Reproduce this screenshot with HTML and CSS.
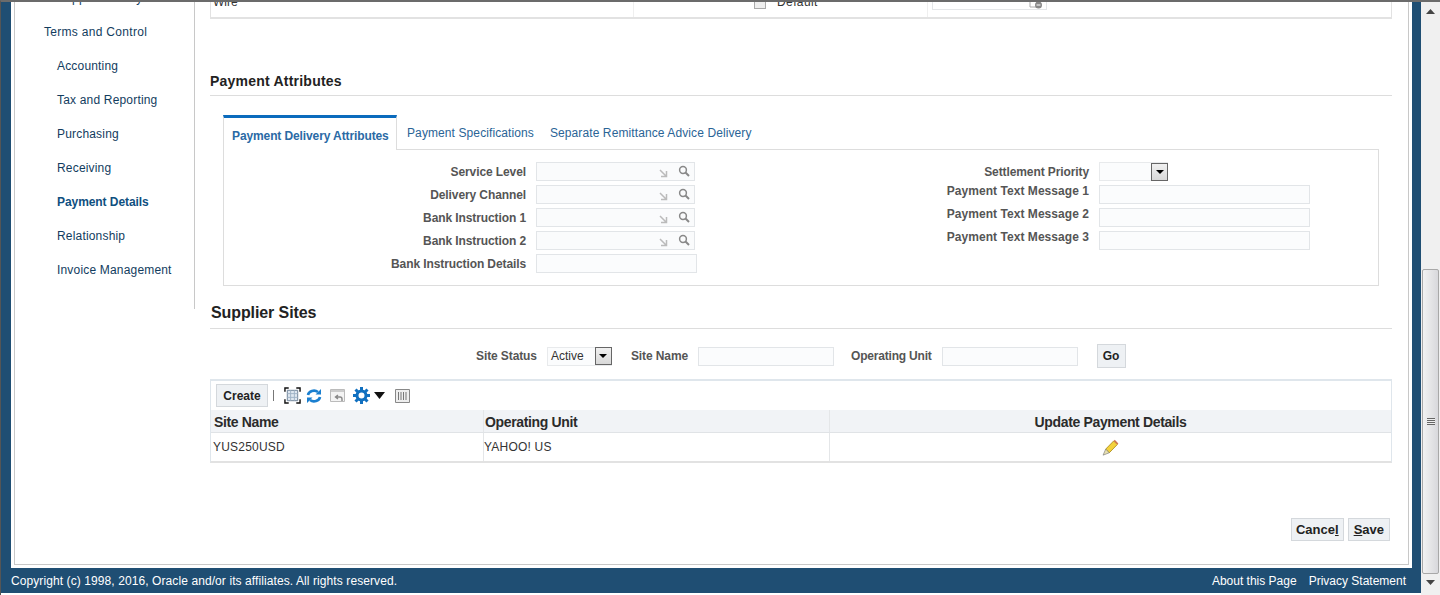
FILE: index.html
```html
<!DOCTYPE html>
<html>
<head>
    <meta charset="utf-8">
    <title>Payment Details</title>
    <link rel="stylesheet" href="styles.css">
</head>
<body>
<div class="window">
    <div class="shell">
        <div class="frame">
            <div class="panel">
                <ul class="side-nav">
                    <li class="sub">Supplier Family</li>
                    <li class="group">Terms and Control</li>
                    <li class="sub">Accounting</li>
                    <li class="sub">Tax and Reporting</li>
                    <li class="sub">Purchasing</li>
                    <li class="sub">Receiving</li>
                    <li class="sub current">Payment Details</li>
                    <li class="sub">Relationship</li>
                    <li class="sub">Invoice Management</li>
                </ul>
                <div class="content">
                    <div class="top-row">
                        <div class="top-cell top-name">Wire</div>
                        <div class="top-cell top-default"><span class="checkbox"></span>Default</div>
                        <div class="top-cell top-date">
                            <span class="date-field">
                                <svg width="14" height="10" viewBox="0 0 14 10"><path d="M1 1h7v7H1z" fill="#fff" stroke="#aaa"/><circle cx="9.500" cy="6" r="3.500" fill="#888"/><path d="M7.500 6h4" stroke="#fff"/></svg>
                            </span>
                        </div>
                    </div>

                    <h2 class="section-title attrs-title">Payment Attributes</h2>

                    <div class="tabs">
                        <div class="tab active">Payment Delivery Attributes</div>
                        <div class="tab">Payment Specifications</div>
                        <div class="tab">Separate Remittance Advice Delivery</div>
                    </div>
                    <div class="tab-box">
                        <div class="form-col form-left">
                            <label>Service Level</label>
                            <div class="lov">
                                <svg class="lov-arrow" width="10" height="10" viewBox="0 0 10 10"><path d="M2 2l6 6M8.500 3v5.500H3" fill="none" stroke="#bbb" stroke-width="1.500"/></svg>
                                <svg class="lov-glass" width="12" height="12" viewBox="0 0 12 12"><circle cx="5" cy="5" r="3.400" fill="none" stroke="#888" stroke-width="1.500"/><path d="M7.500 7.500l3.500 3.500" stroke="#888" stroke-width="2"/></svg>
                            </div>
                            <label>Delivery Channel</label>
                            <div class="lov">
                                <svg class="lov-arrow" width="10" height="10" viewBox="0 0 10 10"><path d="M2 2l6 6M8.500 3v5.500H3" fill="none" stroke="#bbb" stroke-width="1.500"/></svg>
                                <svg class="lov-glass" width="12" height="12" viewBox="0 0 12 12"><circle cx="5" cy="5" r="3.400" fill="none" stroke="#888" stroke-width="1.500"/><path d="M7.500 7.500l3.500 3.500" stroke="#888" stroke-width="2"/></svg>
                            </div>
                            <label>Bank Instruction 1</label>
                            <div class="lov">
                                <svg class="lov-arrow" width="10" height="10" viewBox="0 0 10 10"><path d="M2 2l6 6M8.500 3v5.500H3" fill="none" stroke="#bbb" stroke-width="1.500"/></svg>
                                <svg class="lov-glass" width="12" height="12" viewBox="0 0 12 12"><circle cx="5" cy="5" r="3.400" fill="none" stroke="#888" stroke-width="1.500"/><path d="M7.500 7.500l3.500 3.500" stroke="#888" stroke-width="2"/></svg>
                            </div>
                            <label>Bank Instruction 2</label>
                            <div class="lov">
                                <svg class="lov-arrow" width="10" height="10" viewBox="0 0 10 10"><path d="M2 2l6 6M8.500 3v5.500H3" fill="none" stroke="#bbb" stroke-width="1.500"/></svg>
                                <svg class="lov-glass" width="12" height="12" viewBox="0 0 12 12"><circle cx="5" cy="5" r="3.400" fill="none" stroke="#888" stroke-width="1.500"/><path d="M7.500 7.500l3.500 3.500" stroke="#888" stroke-width="2"/></svg>
                            </div>
                            <label>Bank Instruction Details</label>
                            <div class="text-field details-field"></div>
                        </div>
                        <div class="form-col form-right">
                            <label>Settlement Priority</label>
                            <div class="select priority-select"><span class="select-btn"></span></div>
                            <label class="label-high">Payment Text Message 1</label>
                            <div class="text-field message-field"></div>
                            <label class="label-high">Payment Text Message 2</label>
                            <div class="text-field message-field"></div>
                            <label class="label-high">Payment Text Message 3</label>
                            <div class="text-field message-field"></div>
                        </div>
                    </div>

                    <h2 class="section-title sites-title">Supplier Sites</h2>

                    <div class="filter-row">
                        <label>Site Status</label>
                        <div class="select status-select">Active<span class="select-btn"></span></div>
                        <label class="filter-name">Site Name</label>
                        <div class="text-field filter-field"></div>
                        <label class="filter-unit">Operating Unit</label>
                        <div class="text-field filter-field"></div>
                        <button class="btn go-btn">Go</button>
                    </div>

                    <div class="sites-table">
                        <div class="toolbar">
                            <button class="btn create-btn">Create</button>
                            <span class="tool-sep"></span>
                            <svg width="17" height="17" viewBox="0 0 18 18"><path d="M3.500 3.500h11v11h-11z" fill="#dfe7f0" stroke="#6b7f95"/><path d="M3.500 7h11M3.500 11h11M7 3.500v11M11 3.500v11" stroke="#9fb2c6"/><path d="M1 5V1h4M13 1h4v4M17 13v4h-4M5 17H1v-4" fill="none" stroke="#111" stroke-width="1.500"/></svg>
                            <svg class="tool-refresh" width="16" height="16" viewBox="0 0 16 16"><path d="M2 7a6 5 0 0 1 10-3" fill="none" stroke="#1a7fd0" stroke-width="2.600"/><path d="M14 9a6 5 0 0 1-10 3" fill="none" stroke="#1a7fd0" stroke-width="2.600"/><path d="M9.500 6.500h5.500V1zM6.500 9.500H1V15z" fill="#1a7fd0"/></svg>
                            <svg class="tool-detach" width="16" height="16" viewBox="0 0 16 16"><path d="M.5 1.500h14v12H.5z" fill="#f4f4f4" stroke="#bbb"/><path d="M1 2h13v2H1z" fill="#ccc"/><path d="M8 7L5.500 9 8 11M6 9h4a2 2 0 0 1 2 2v2" fill="none" stroke="#888" stroke-width="1.400"/></svg>
                            <svg class="tool-gear" width="17" height="17" viewBox="0 0 17 17"><circle cx="8.500" cy="8.500" r="4.500" fill="none" stroke="#1170c0" stroke-width="3"/><path d="M8.500 0v3.500M8.500 13.500V17M0 8.500h3.500M13.500 8.500H17M2.500 2.500L5 5M12 12l2.500 2.500M14.500 2.500L12 5M5 12l-2.500 2.500" stroke="#1170c0" stroke-width="3"/></svg>
                            <svg class="tool-caret" width="11" height="7" viewBox="0 0 11 7"><path d="M0 0h11L5.500 7z" fill="#111"/></svg>
                            <svg class="tool-cols" width="15" height="14" viewBox="0 0 15 14"><path d="M.5.500h14v13H.5z" fill="#eee" stroke="#888"/><path d="M3.500 3v8M6 3v8M8.500 3v8M11 3v8" stroke="#777"/></svg>
                        </div>
                        <div class="table-row table-head">
                            <div class="col col-name">Site Name</div>
                            <div class="col col-unit">Operating Unit</div>
                            <div class="col col-edit">Update Payment Details</div>
                        </div>
                        <div class="table-row table-body">
                            <div class="col col-name">YUS250USD</div>
                            <div class="col col-unit">YAHOO! US</div>
                            <div class="col col-edit">
                                <svg width="17" height="17" viewBox="0 0 16 16"><path d="M3.500 9.500L11 1.800l3.400 3.400L6.800 13z" fill="#f4d23c" stroke="#a98a16" stroke-width=".8"/><path d="M11 1.800l1-1 3.400 3.400-1 1z" fill="#d2744c"/><path d="M3.500 9.500L1 15.200 6.800 13z" fill="#e8e0b0" stroke="#777" stroke-width=".6"/></svg>
                            </div>
                        </div>
                    </div>

                    <div class="page-actions">
                        <button class="btn action-btn">Cance<u>l</u></button>
                        <button class="btn action-btn save-btn"><u>S</u>ave</button>
                    </div>
                </div>
            </div>
        </div>
        <div class="footer">
            <span class="copyright">Copyright (c) 1998, 2016, Oracle and/or its affiliates. All rights reserved.</span>
            <span class="footer-links"><a>About this Page</a><a>Privacy Statement</a></span>
        </div>
    </div>
    <div class="scrollbar">
        <svg class="scroll-arrow" width="9" height="5" viewBox="0 0 9 5"><path d="M4.500 0L9 5H0z" fill="#444"/></svg>
        <div class="scroll-thumb"><span class="grip"></span></div>
        <svg class="scroll-arrow" width="9" height="5" viewBox="0 0 9 5"><path d="M0 0h9L4.500 5z" fill="#444"/></svg>
    </div>
</div>
</body>
</html>
```

FILE: styles.css
```css
*{
    padding: 0;
    margin: 0;
    box-sizing: border-box;
}
html, body{
    height: 100%;
    overflow: hidden;
    background: #fff;
}
body{
    font-family: "Liberation Sans", Arial, sans-serif;
    font-size: 12px;
    color: #333;
}
.window{
    display: flex;
    width: 1440px;
    height: 595px;
    border-top: 2px solid #6b6b6b;
    border-left: 1px solid #555;
}

/* blue page chrome */
.shell{
    width: 1420px;
    height: 591px;
    background: #1f4e73;
    display: flex;
    flex-direction: column;
}
.frame{
    flex: none;
    height: 566px;
    margin: 0 9px 0 10px;
    padding: 0 3px 3px;
    background: #fff;
}
.panel{
    display: flex;
    height: 100%;
    overflow: hidden;
    background: #fff;
    border-left: 1px solid #c8c8c8;
    border-right: 1px solid #c8c8c8;
    border-bottom: 1px solid #c8c8c8;
}
.footer{
    flex: 1;
    display: flex;
    justify-content: space-between;
    align-items: center;
    padding: 0 15px 0 10px;
    color: #fff;
    letter-spacing: .09px;
}
.footer-links{
    letter-spacing: 0;
}
.footer-links a{
    margin-left: 12px;
}

/* left navigation */
.side-nav{
    flex: none;
    width: 180px;
    height: 328px;
    margin-top: -21px;
    padding-left: 29px;
    list-style: none;
    border-right: 1px solid #c8c8c8;
    color: #123c5e;
    letter-spacing: .18px;
}
.side-nav li{
    height: 34px;
    line-height: 34px;
    white-space: nowrap;
}
.side-nav .group{
    letter-spacing: .3px;
}
.side-nav .sub{
    padding-left: 13px;
}
.side-nav .current{
    font-weight: bold;
    color: #0f4f80;
    letter-spacing: -.07px;
}

.content{
    width: 1182px;
    margin-left: 15px;
    flex: none;
}

/* row cut off by the scroll position */
.top-row{
    display: flex;
    height: 29px;
    margin-top: -12px;
    border: 1px solid #e2e2e2;
    border-top: 0;
    border-bottom-width: 2px;
}
.top-cell{
    height: 100%;
    line-height: 24px;
    border-right: 1px solid #efefef;
}
.top-name{
    width: 423px;
    padding-left: 2px;
}
.top-default{
    width: 294px;
    display: flex;
    align-items: flex-start;
    padding-left: 120px;
    letter-spacing: .4px;
}
.checkbox{
    width: 12px;
    height: 12px;
    margin: 7px 11px 0 0;
    border: 1px solid #aaa;
    background: #eee;
}
.top-date{
    flex: 1;
    border-right: 0;
    padding-left: 4px;
}
.date-field{
    display: flex;
    justify-content: flex-end;
    align-items: flex-end;
    width: 115px;
    height: 20px;
    border: 1px solid #e4e6e8;
    padding-right: 3px;
}

.section-title{
    font-weight: bold;
    color: #222;
    border-bottom: 1px solid #ddd;
}
.attrs-title{
    margin-top: 52px;
    height: 25px;
    line-height: 20px;
    font-size: 14px;
    letter-spacing: .22px;
}
.sites-title{
    margin-top: 15px;
    height: 28px;
    line-height: 24px;
    font-size: 16px;
    padding-left: 1px;
    letter-spacing: -.1px;
}

/* tabs */
.tabs{
    display: flex;
    margin: 19px 13px 0;
    height: 35px;
    color: #2a6496;
    position: relative;
    z-index: 1;
}
.tab{
    padding: 5px 6px 0 10px;
    line-height: 27px;
    letter-spacing: .1px;
    white-space: nowrap;
}
.tab.active{
    width: 174px;
    height: 35px;
    padding: 5px 0 0 8px;
    border-top: 3px solid #0a6bbd;
    border-left: 1px solid #ddd;
    border-right: 1px solid #ddd;
    background: #fff;
    font-weight: bold;
    color: #2a6aa5;
    letter-spacing: -.11px;
}
.tab-box{
    display: flex;
    height: 137px;
    margin: -1px 13px 0;
    border: 1px solid #ddd;
}
.form-col{
    display: grid;
    grid-auto-rows: 23px;
    align-items: start;
    padding-top: 12px;
    font-weight: bold;
    color: #555;
    letter-spacing: -.1px;
}
.form-col label{
    text-align: right;
    line-height: 21px;
}
.form-col .label-high{
    line-height: 12px;
    letter-spacing: .05px;
}
.form-left{
    width: 473px;
    grid-template-columns: 302px 1fr;
    column-gap: 10px;
}
.form-right{
    width: 613px;
    grid-template-columns: 392px 1fr;
    column-gap: 10px;
}

/* inputs */
.text-field{
    height: 19px;
    border: 1px solid #e2e5e8;
    background: #fbfcfd;
}
.details-field{
    width: 161px;
}
.message-field{
    width: 211px;
}
.lov{
    display: flex;
    align-items: center;
    justify-content: flex-end;
    width: 159px;
    height: 19px;
    padding-right: 4px;
    border: 1px solid #e2e5e8;
    background: #fafbfc;
}
.lov-arrow{
    margin: 3px 10px 0 0;
}
.lov-glass{
    margin-top: -2px;
}
.select{
    display: flex;
    align-items: center;
    height: 19px;
    padding-left: 3px;
    border: 1px solid #e8eaec;
    background: #fbfcfd;
    font-weight: normal;
}
.select-btn{
    display: flex;
    align-items: center;
    justify-content: center;
    width: 17px;
    height: 18px;
    margin: 0 -1px 0 auto;
    border: 1px solid #666;
    background: linear-gradient(#f0f0f0, #d8d8d8);
}
.select-btn::after{
    content: "";
    border-style: solid;
    border-width: 4px 4px 0;
    border-color: #000 transparent transparent;
}
.priority-select{
    width: 69px;
}
.status-select{
    width: 65px;
    color: #333;
}

/* filter row above the table */
.filter-row{
    display: flex;
    align-items: center;
    height: 24px;
    margin-top: 15px;
    padding-left: 266px;
    font-weight: bold;
    color: #555;
}
.filter-row label{
    margin-right: 10px;
    white-space: nowrap;
    letter-spacing: -.1px;
}
.filter-row .filter-name{
    margin-left: 19px;
}
.filter-row .filter-unit{
    margin-left: 17px;
    letter-spacing: -.2px;
}
.filter-field{
    width: 136px;
}
.btn{
    font-family: inherit;
    font-weight: bold;
    font-size: 12px;
    color: #222;
    background: #eef1f4;
    border: 1px solid #d4d8dc;
}
.go-btn{
    width: 29px;
    height: 24px;
    margin-left: 19px;
}

/* sites table */
.sites-table{
    margin-top: 11px;
    border-top: 2px solid #dfe6ec;
    border-left: 1px solid #dfe6ec;
    border-right: 1px solid #dfe6ec;
    border-bottom: 2px solid #e2e2e2;
}
.toolbar{
    display: flex;
    align-items: center;
    height: 29px;
    padding-left: 5px;
}
.create-btn{
    width: 52px;
    height: 23px;
}
.tool-sep{
    width: 1px;
    height: 11px;
    margin: 0 10px 0 5px;
    background: #777;
}
.tool-refresh{
    margin-left: 5px;
}
.tool-detach{
    margin-left: 8px;
}
.tool-gear{
    margin-left: 7px;
}
.tool-caret{
    margin-left: 4px;
}
.tool-cols{
    margin-left: 10px;
}
.table-row{
    display: flex;
}
.col{
    padding-left: 1px;
    border-right: 1px solid #e4e6e8;
    white-space: nowrap;
}
.col-name{
    width: 273px;
}
.col-unit{
    width: 346px;
}
.col-edit{
    flex: 1;
    padding-left: 0;
    text-align: center;
    border-right: 0;
}
.table-head{
    height: 23px;
    background: #f1f3f6;
    border-bottom: 1px solid #e0e3e6;
    font-size: 14px;
    font-weight: bold;
    color: #2b2b2b;
    line-height: 24px;
    letter-spacing: -.35px;
}
.table-head .col-name{
    padding-left: 3px;
}
.table-body{
    height: 28px;
    line-height: 29px;
    letter-spacing: .2px;
}
.table-body .col-name{
    padding-left: 2px;
}
.table-body .col-unit{
    padding-left: 0;
}
.table-body .col-edit svg{
    margin-top: 6px;
}

.page-actions{
    display: flex;
    justify-content: flex-end;
    gap: 4px;
    margin-top: 55px;
    padding-right: 2px;
}
.action-btn{
    height: 23px;
    padding: 0 4px;
    font-size: 13px;
}
.save-btn{
    padding: 0 5px;
}

/* browser scrollbar */
.scrollbar{
    flex: none;
    width: 19px;
    height: 593px;
    display: flex;
    flex-direction: column;
    align-items: center;
    padding-top: 7px;
    background: #f0f0f0;
}
.scroll-thumb{
    display: flex;
    align-items: center;
    justify-content: center;
    width: 17px;
    height: 305px;
    margin: 255px 0 6px;
    border: 1px solid #a8a8a8;
    border-radius: 2px;
    background: linear-gradient(90deg, #f2f2f2, #d8d8dc);
}
.grip{
    width: 8px;
    height: 7px;
    background: repeating-linear-gradient(#666 0 1px, #eee 1px 2px);
}
```
